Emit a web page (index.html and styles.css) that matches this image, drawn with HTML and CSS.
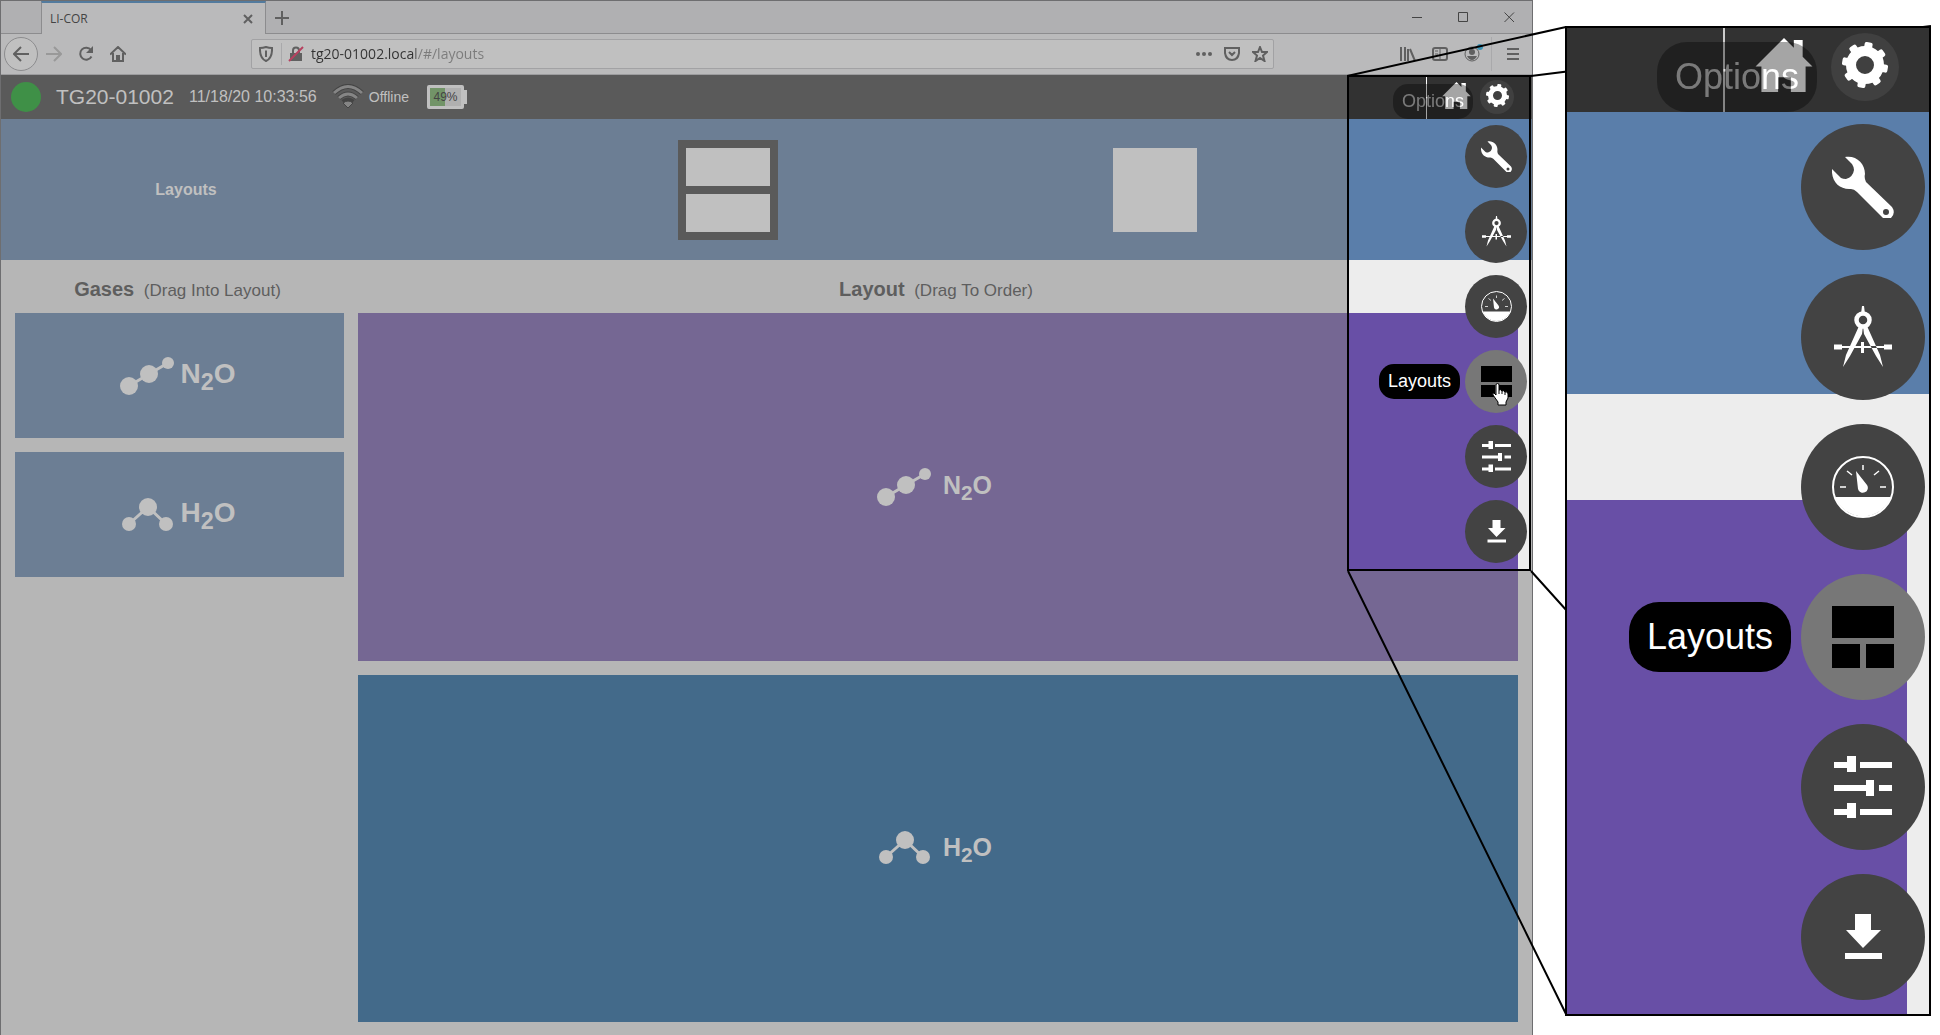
FILE: index.html
```html
<!DOCTYPE html>
<html lang="en">
<head>
    <meta charset="UTF-8">
    <meta name="viewport" content="width=device-width, initial-scale=1.0">
    <title>LI-COR</title>
    <link rel="stylesheet" href="styles.css">
</head>
<body>
    <!-- Shared icons -->
    <svg class="sprite" aria-hidden="true">
        <symbol id="home" viewBox="0 0 58 55">
            <path d="M29 0L39 10V2H48V19L58 29H51V55H36V40H23V55H6V29H0Z"/>
        </symbol>
        <symbol id="gear" viewBox="-23 -23 46 46">
            <circle r="14" fill="none" stroke="#fff" stroke-width="10"/>
            <g id="teeth" transform="rotate(10)">
                <rect x="-4" y="-23" width="8" height="7" rx="2"/>
                <rect x="-4" y="-23" width="8" height="7" rx="2" transform="rotate(45)"/>
                <rect x="-4" y="-23" width="8" height="7" rx="2" transform="rotate(90)"/>
                <rect x="-4" y="-23" width="8" height="7" rx="2" transform="rotate(135)"/>
                <rect x="-4" y="-23" width="8" height="7" rx="2" transform="rotate(180)"/>
                <rect x="-4" y="-23" width="8" height="7" rx="2" transform="rotate(225)"/>
                <rect x="-4" y="-23" width="8" height="7" rx="2" transform="rotate(270)"/>
                <rect x="-4" y="-23" width="8" height="7" rx="2" transform="rotate(315)"/>
            </g>
        </symbol>
        <symbol id="wrench" viewBox="0 0 62 62">
            <path fill-rule="evenodd" d="M13 1C24-1 33 7 33 18Q32 22 34 26L60 51Q64 57 59 62H51L25 36Q22 33 19 33C8 34-1 26 0 13L9 22Q11 23 14 23Q21 21 22 14Q22 11 20 8ZM54 53A3 3 0 1 0 54 59A3 3 0 1 0 54 53Z"/>
        </symbol>
        <symbol id="compass" viewBox="0 0 62 62">
            <path d="M29 8L30 0H32L33 8ZM27 20H31L30 28L18 50L11 61L14 49ZM35 20H31L32 28L44 50L51 61L48 49ZM2 38.500H10V40H52V38.500H60V43.500H52V42H10V43.500H2ZM29 36H32V47H29Z"/>
            <circle cx="31" cy="14" r="6.500" fill="none" stroke="#fff" stroke-width="4.500"/>
        </symbol>
        <symbol id="gauge" viewBox="0 0 62 62">
            <circle cx="31" cy="31" r="30" fill="none" stroke="#fff" stroke-width="2"/>
            <path d="M3 41H59A30 30 0 0 1 3 41ZM24 15L35 29A5 5 0 1 1 26 33Z"/>
            <path stroke="#fff" stroke-width="1.500" d="M31 9V14M15 15L20 19M47 15L42 19M8 31H14M48 31H54"/>
        </symbol>
        <symbol id="layouts" viewBox="0 0 62 62">
            <path d="M0 0H62V32H0ZM0 38H28V62H0ZM34 38H62V62H34Z"/>
        </symbol>
        <symbol id="sliders" viewBox="0 0 62 62">
            <path d="M2 6H15V0H24V16H15V12H2ZM28 6H60V12H28ZM2 29H34V24H42V40H34V35H2ZM47 29H60V35H47ZM2 53H15V47H24V62H15V59H2ZM28 53H60V59H28Z"/>
        </symbol>
        <symbol id="download" viewBox="0 0 62 62">
            <path d="M23 8H39V24H49L31 42L14 24H23ZM13 47H50V53H13Z"/>
        </symbol>
        <symbol id="n2o" viewBox="0 0 56 38">
            <path stroke="#c0c0c0" stroke-width="3" d="M9 29L29 17L48 6"/>
            <circle cx="9" cy="29" r="9"/>
            <circle cx="29" cy="17" r="9"/>
            <circle cx="48" cy="6" r="6"/>
        </symbol>
        <symbol id="h2o" viewBox="0 0 56 38">
            <path fill="none" stroke="#c0c0c0" stroke-width="3" d="M9 28L28 11L46 28"/>
            <circle cx="9" cy="28" r="7"/>
            <circle cx="28" cy="11" r="9"/>
            <circle cx="46" cy="28" r="7"/>
        </symbol>
    </svg>

    <div class="window">
        <div class="tab-strip">
            <div class="tab">
                <span>LI-COR</span>
                <button class="plain" aria-label="Close tab">
                    <svg width="10" height="10" class="line"><path d="M1 1L9 9M9 1L1 9"/></svg>
                </button>
            </div>
            <button class="plain new-tab" aria-label="New tab">
                <svg width="14" height="14" class="line"><path d="M7 0V14M0 7H14"/></svg>
            </button>
            <div class="window-buttons">
                <button class="plain" aria-label="Minimize"><svg width="11" height="11" class="thin"><path d="M0 5.500H10"/></svg></button>
                <button class="plain" aria-label="Maximize"><svg width="11" height="11" class="thin"><path d="M.5 .5H9.500V9.500H.5Z"/></svg></button>
                <button class="plain" aria-label="Close"><svg width="11" height="11" class="thin"><path d="M.5 .5L10 10M10 .5L.5 10"/></svg></button>
            </div>
        </div>

        <div class="toolbar">
            <div class="nav-buttons">
                <button class="plain back" aria-label="Back">
                    <svg width="16" height="16" class="line"><path d="M16 8H1M8 1L1 8L8 15"/></svg>
                </button>
                <button class="plain" aria-label="Forward">
                    <svg width="16" height="16" class="line faded"><path d="M0 8H15M8 1L15 8L8 15"/></svg>
                </button>
                <button class="plain" aria-label="Reload">
                    <svg width="16" height="16" class="line"><path d="M13 4A6 6 0 1 0 13.500 10.500"/><path d="M15 0V7H8Z" fill="#606060" stroke="none"/></svg>
                </button>
                <button class="plain" aria-label="Home">
                    <svg width="16" height="16" class="line"><path d="M0 8.500L8 1L16 8.500M3 7V15H13V7M7 15V10H9V15"/></svg>
                </button>
            </div>
            <div class="url-bar">
                <svg width="14" height="16" class="line"><path d="M1 2Q4 2 7 1Q10 2 13 2Q13.500 12 7 15Q.5 12 1 2Z"/><path d="M7 4.500V11"/></svg>
                <span class="divider"></span>
                <svg width="16" height="16">
                    <path d="M2 7H14V15H2Z" fill="#606060"/>
                    <path d="M5 8V4.500Q5 1.500 8 1.500Q11 1.500 11 4.500V8" fill="none" stroke="#606060" stroke-width="2"/>
                    <path d="M1 15L15 1" stroke="#b6405f" stroke-width="2"/>
                </svg>
                <input type="text" class="url" aria-label="Address" value="tg20-01002.local/#/layouts">
                <button class="plain" aria-label="Page actions">
                    <svg width="16" height="16" fill="#606060"><circle cx="2" cy="8" r="2"/><circle cx="8" cy="8" r="2"/><circle cx="14" cy="8" r="2"/></svg>
                </button>
                <button class="plain" aria-label="Save to Pocket">
                    <svg width="16" height="16" class="line"><path d="M1 2H15V7Q14 14 8 14Q2 14 1 7ZM5 6L8 9L11 6"/></svg>
                </button>
                <button class="plain" aria-label="Bookmark">
                    <svg width="16" height="16" class="line"><path d="M8 1L10 6H15L11 9.500L12.500 15L8 12L3.500 15L5 9.500L1 6H6Z"/></svg>
                </button>
            </div>
            <div class="tool-buttons">
                <button class="plain" aria-label="Library">
                    <svg width="16" height="16" class="line"><path d="M1 1V15M5 1V15M8 3V15M10 3L15 15"/></svg>
                </button>
                <button class="plain" aria-label="Sidebars">
                    <svg width="16" height="14" class="line"><rect x="1" y="1" width="14" height="12" rx="2"/><path d="M8 1V13M3 4H6M3 7H6" stroke-width="1"/></svg>
                </button>
                <button class="plain account" aria-label="Account">
                    <svg width="16" height="16"><circle cx="8" cy="8" r="7" fill="none" stroke="#606060"/><circle cx="8" cy="6" r="3" fill="#606060"/><path d="M3 10H13Q11 14 8 14Q5 14 3 10Z" fill="#606060"/></svg>
                </button>
                <span class="divider tall"></span>
                <button class="plain" aria-label="Menu">
                    <svg width="12" height="12" class="line"><path d="M0 1H12M0 6H12M0 11H12"/></svg>
                </button>
            </div>
        </div>

        <div class="status-bar">
            <span class="status-light"></span>
            <span class="device">TG20-01002</span>
            <span class="clock">11/18/20 10:33:56</span>
            <svg class="wifi" width="32" height="26" viewBox="0 0 32 26">
                <g fill="none" stroke="#444" stroke-width="5"><path d="M2 9Q16-4 30 9M7 14Q16 6 25 14M11 18Q16 14 21 18"/></g>
                <g fill="none" stroke="#858585" stroke-width="3"><path d="M2 9Q16-4 30 9M7 14Q16 6 25 14"/></g>
                <path d="M11 19Q16 15 21 19L16 24Z" fill="#858585" stroke="#444"/>
            </svg>
            <span class="network">Offline</span>
            <span class="battery"><span class="charge" style="width: 49%"></span><span class="percent">49%</span></span>
        </div>

        <div class="layout-picker">
            <h1>Layouts</h1>
            <div class="choices">
                <button class="choice selected" aria-label="Two rows"><span></span><span></span></button>
                <button class="choice" aria-label="Single"><span></span></button>
            </div>
        </div>

        <div class="workspace">
            <div class="gases">
                <h2>Gases <small>(Drag Into Layout)</small></h2>
                <div class="gas"><svg><use href="#n2o"/></svg><span>N<sub>2</sub>O</span></div>
                <div class="gas"><svg><use href="#h2o"/></svg><span>H<sub>2</sub>O</span></div>
            </div>
            <div class="layout">
                <h2>Layout <small>(Drag To Order)</small></h2>
                <div class="slot purple"><svg><use href="#n2o"/></svg><span>N<sub>2</sub>O</span></div>
                <div class="slot blue"><svg><use href="#h2o"/></svg><span>H<sub>2</sub>O</span></div>
            </div>
        </div>

        <!-- Options menu, not dimmed -->
        <div class="lens spot">
            <div class="lens-bar">
                <div class="lens-nav">
                    <svg class="home-icon"><use href="#home"/></svg>
                    <button class="gear" aria-label="Options"><svg><use href="#gear"/></svg></button>
                    <span class="tip faint">Options</span>
                </div>
            </div>
            <div class="lens-band"></div>
            <div class="lens-slot"></div>
            <div class="menu">
                <button aria-label="Tools"><svg><use href="#wrench"/></svg></button>
                <button aria-label="Calibration"><svg><use href="#compass"/></svg></button>
                <button aria-label="Gauges"><svg><use href="#gauge"/></svg></button>
                <button class="active"><svg><use href="#layouts"/></svg><span class="tip">Layouts</span></button>
                <button aria-label="Settings"><svg><use href="#sliders"/></svg></button>
                <button aria-label="Download"><svg><use href="#download"/></svg></button>
            </div>
            <svg class="cursor" viewBox="0 0 17 23">
                <path d="M4 2Q4 .5 5.500 .5Q7 .5 7 2V7Q9 6 10 8Q12 7 13 9Q16 8 16 11V15L14 19V22H6V19L1 12Q0 10 2 10L4 12Z" fill="#fff" stroke="#000"/>
                <path d="M7 7V11M10 8V11M13 9V12" stroke="#000"/>
            </svg>
        </div>
    </div>

    <svg class="callout-lines" width="584" height="1016" aria-hidden="true">
        <path d="M0 76L219 27M184 76L584 26M184 571L584 1015M1 571L219 1014"/>
    </svg>

    <div class="callout">
        <div class="lens large">
            <div class="lens-bar">
                <div class="lens-nav">
                    <svg class="home-icon"><use href="#home"/></svg>
                    <button class="gear" aria-label="Options"><svg><use href="#gear"/></svg></button>
                    <span class="tip faint">Options</span>
                </div>
            </div>
            <div class="lens-band"></div>
            <div class="lens-slot"></div>
            <div class="menu">
                <button aria-label="Tools"><svg><use href="#wrench"/></svg></button>
                <button aria-label="Calibration"><svg><use href="#compass"/></svg></button>
                <button aria-label="Gauges"><svg><use href="#gauge"/></svg></button>
                <button class="active"><svg><use href="#layouts"/></svg><span class="tip">Layouts</span></button>
                <button aria-label="Settings"><svg><use href="#sliders"/></svg></button>
                <button aria-label="Download"><svg><use href="#download"/></svg></button>
            </div>
        </div>
    </div>
</body>
</html>
```

FILE: styles.css
```css
* {
    box-sizing: border-box;
}
body {
    margin: 0;
    min-height: 100vh;
    display: flex;
    position: relative;
    background: #fff;
    font-family: "Liberation Sans", Arial, sans-serif;
}
svg {
    display: block;
    flex: none;
}
button {
    font-family: inherit;
    cursor: pointer;
}
.sprite {
    position: absolute;
    width: 0;
    height: 0;
}
.plain {
    display: flex;
    align-items: center;
    justify-content: center;
    padding: 0;
    border: none;
    background: none;
}
.line {
    fill: none;
    stroke: #606060;
    stroke-width: 2;
}
.thin {
    fill: none;
    stroke: #444;
    stroke-width: 1;
}
.faded {
    stroke: #999;
}

/* browser window */
.window {
    flex: 1;
    min-width: 0;
    display: flex;
    flex-direction: column;
    position: relative;
    border: 1px solid #6e6e70;
    border-bottom: none;
    background: #b6b6b6;
}
.tab-strip {
    display: flex;
    height: 33px;
    padding-left: 40px;
    background: linear-gradient(#8c8c8e, #8c8c8e) bottom / 100% 1px no-repeat #b0b0b2;
}
.tab {
    width: 225px;
    display: flex;
    align-items: center;
    justify-content: space-between;
    padding: 0 12px 0 8px;
    border-top: 2px solid #537b9e;
    border-left: 1px solid #8c8c8e;
    border-right: 1px solid #8c8c8e;
    background: #bababb;
    color: #444;
    font: 12px "Open Sans", sans-serif;
}
.new-tab {
    width: 32px;
}
.window-buttons {
    display: flex;
    gap: 35px;
    margin-left: auto;
    padding-right: 17px;
}
.toolbar {
    display: flex;
    align-items: center;
    height: 41px;
    border-bottom: 1px solid #9c9c9e;
    background: #bababb;
}
.nav-buttons {
    width: 250px;
    display: flex;
    align-items: center;
    gap: 16px;
    padding-left: 3px;
}
.back {
    width: 34px;
    height: 34px;
    margin-right: -8px;
    border: 1px solid #8c8c8e;
    border-radius: 50%;
    background: #c0c0c0;
}
.url-bar {
    flex: 1;
    height: 30px;
    display: flex;
    align-items: center;
    gap: 12px;
    padding: 0 5px 0 7px;
    border: 1px solid #a2a2a4;
    border-radius: 2px;
    background: #c0c0c0;
}
.divider {
    width: 1px;
    height: 22px;
    margin: 0 -6px 0 -4px;
    background: #a9a9ab;
}
.divider.tall {
    height: 34px;
    margin: 0 -1px 0 -5px;
}
.url {
    flex: 1;
    min-width: 0;
    margin-left: -5px;
    padding: 0;
    border: none;
    outline: none;
    color: #444;
    background: linear-gradient(90deg, #333 105px, #7b7b7b 105px);
    -webkit-background-clip: text;
    background-clip: text;
    -webkit-text-fill-color: transparent;
    font: 14px/24px "Open Sans", sans-serif;
}
.tool-buttons {
    width: 258px;
    display: flex;
    align-items: center;
    justify-content: flex-end;
    gap: 16px;
    padding-right: 13px;
}
.account {
    position: relative;
}
.account::after {
    content: "";
    position: absolute;
    top: -2px;
    right: -3px;
    width: 6px;
    height: 6px;
    border-radius: 50%;
    background: #3a93b5;
}

/* instrument page */
.status-bar {
    display: flex;
    align-items: center;
    height: 44px;
    padding-left: 10px;
    background: #5a5a5a;
    color: #c0c0c0;
}
.status-light {
    width: 30px;
    height: 30px;
    margin-right: 15px;
    border-radius: 50%;
    background: #3f9047;
}
.device {
    margin-right: 15px;
    font-size: 21px;
}
.clock {
    font-size: 16px;
}
.wifi {
    margin: 0 5px 0 15px;
}
.network {
    font-size: 14px;
}
.battery {
    position: relative;
    width: 37px;
    height: 24px;
    margin-left: 18px;
    border: 3px solid #c0c0c0;
    border-radius: 2px;
    background: #b0b0b0;
}
.battery::after {
    content: "";
    position: absolute;
    top: 2px;
    right: -6px;
    width: 3px;
    height: 14px;
    background: #c0c0c0;
}
.charge {
    display: block;
    height: 18px;
    background: #729468;
}
.percent {
    position: absolute;
    inset: 0;
    color: #444;
    font-size: 12px;
    line-height: 18px;
    text-align: center;
}
.layout-picker {
    display: flex;
    align-items: center;
    height: 141px;
    background: #6c7e94;
}
.layout-picker h1 {
    width: 350px;
    margin: 0;
    padding-left: 20px;
    color: #c0c0c0;
    font-size: 16px;
    text-align: center;
}
.choices {
    flex: 1;
    display: flex;
    justify-content: space-evenly;
}
.choice {
    width: 100px;
    height: 100px;
    display: flex;
    flex-direction: column;
    gap: 8px;
    padding: 8px;
    border: none;
    background: none;
}
.choice.selected {
    background: #5a5a5a;
}
.choice span {
    flex: 1;
    background: #c0c0c0;
}
.workspace {
    flex: 1;
    display: flex;
    gap: 14px;
    padding: 0 14px 13px;
}
.gases {
    width: 329px;
}
.layout {
    flex: 1;
}
.gases,
.layout {
    display: flex;
    flex-direction: column;
    gap: 14px;
}
h2 {
    height: 39px;
    margin: 0;
    padding: 8px 4px 0 0;
    color: #5e5e5e;
    font-size: 20px;
    line-height: 42px;
    text-align: center;
}
h2 small {
    margin-left: 4px;
    font-size: 17px;
    font-weight: normal;
}
.gas,
.slot {
    display: flex;
    align-items: center;
    justify-content: center;
    color: #c0c0c0;
    fill: #c0c0c0;
    font-weight: bold;
}
.gas svg,
.slot svg {
    width: 56px;
    height: 38px;
}
.gas {
    height: 125px;
    gap: 5px;
    padding-right: 4px;
    background: #6c7e94;
    font-size: 28px;
}
.slot {
    flex: 1;
    gap: 10px;
    padding-right: 7px;
    font-size: 25px;
}
.gas span,
.slot span {
    padding-bottom: 3px;
    line-height: 32px;
}
sub {
    line-height: 0;
}
.purple {
    background: #756793;
}
.blue {
    background: #436a8a;
}

/* lens: every length is in --u, so the large one is twice the small one */
.lens {
    --u: 1px;
    position: relative;
    overflow: hidden;
    display: flex;
    flex-direction: column;
    border: 2px solid #000;
    background: #ededed;
}
.spot {
    position: absolute;
    top: 74px;
    right: 1px;
    width: 184px;
    height: 496px;
}
.large {
    --u: 2px;
    height: 990px;
}
.lens-bar {
    height: calc(42 * var(--u));
    display: flex;
    justify-content: flex-end;
    background: #323232;
}
.lens-nav {
    position: relative;
    width: calc(103 * var(--u));
    display: flex;
    align-items: center;
    justify-content: flex-end;
    gap: calc(9 * var(--u));
    padding: 0 calc(15 * var(--u)) calc(3 * var(--u)) 0;
    border-left: 1px solid #fff;
}
.large .lens-nav {
    border-left: 2px solid #ccc;
}
.home-icon {
    width: calc(29 * var(--u));
    height: calc(27 * var(--u));
    margin-bottom: calc(2 * var(--u));
    fill: #fff;
}
.gear {
    width: calc(34 * var(--u));
    height: calc(34 * var(--u));
    padding: 0 0 calc(2 * var(--u));
    border: none;
    border-radius: 50%;
    background: #404040;
}
.gear svg {
    width: calc(23 * var(--u));
    height: calc(23 * var(--u));
    margin: 0 auto;
    fill: #fff;
}
.lens-band {
    height: calc(141 * var(--u));
    background: #5a7eaa;
}
.lens-slot {
    flex: 1;
    margin: calc(53 * var(--u)) calc(11 * var(--u)) 0 0;
    background: #684fa6;
}
.menu {
    position: absolute;
    top: calc(48 * var(--u));
    right: calc(2 * var(--u));
    display: flex;
    flex-direction: column;
    gap: calc(12 * var(--u));
}
.menu button {
    position: relative;
    width: calc(62 * var(--u));
    height: calc(63 * var(--u));
    display: flex;
    align-items: center;
    justify-content: center;
    padding: 0;
    border: none;
    border-radius: 50%;
    background: #434343;
    fill: #fff;
}
.menu button svg {
    width: calc(31 * var(--u));
    height: calc(31 * var(--u));
}
.menu .active {
    background: #777;
    fill: #000;
}
.tip {
    position: absolute;
    right: calc(100% + 5 * var(--u));
    padding: 0 calc(9 * var(--u));
    border-radius: calc(15 * var(--u));
    background: #000;
    color: #fff;
    font-size: calc(18 * var(--u));
    line-height: calc(35 * var(--u));
}
.tip.faint {
    top: calc(7 * var(--u));
    right: calc(56 * var(--u));
    opacity: .35;
}
.cursor {
    position: absolute;
    top: 306px;
    left: 143px;
    width: 17px;
    height: 23px;
}

/* enlarged view */
.callout {
    flex: 0 0 407px;
    position: relative;
    padding: 26px 9px 0 32px;
}
.callout-lines {
    position: absolute;
    top: 0;
    right: 9px;
    fill: none;
    stroke: #000;
    stroke-width: 2;
}
```
